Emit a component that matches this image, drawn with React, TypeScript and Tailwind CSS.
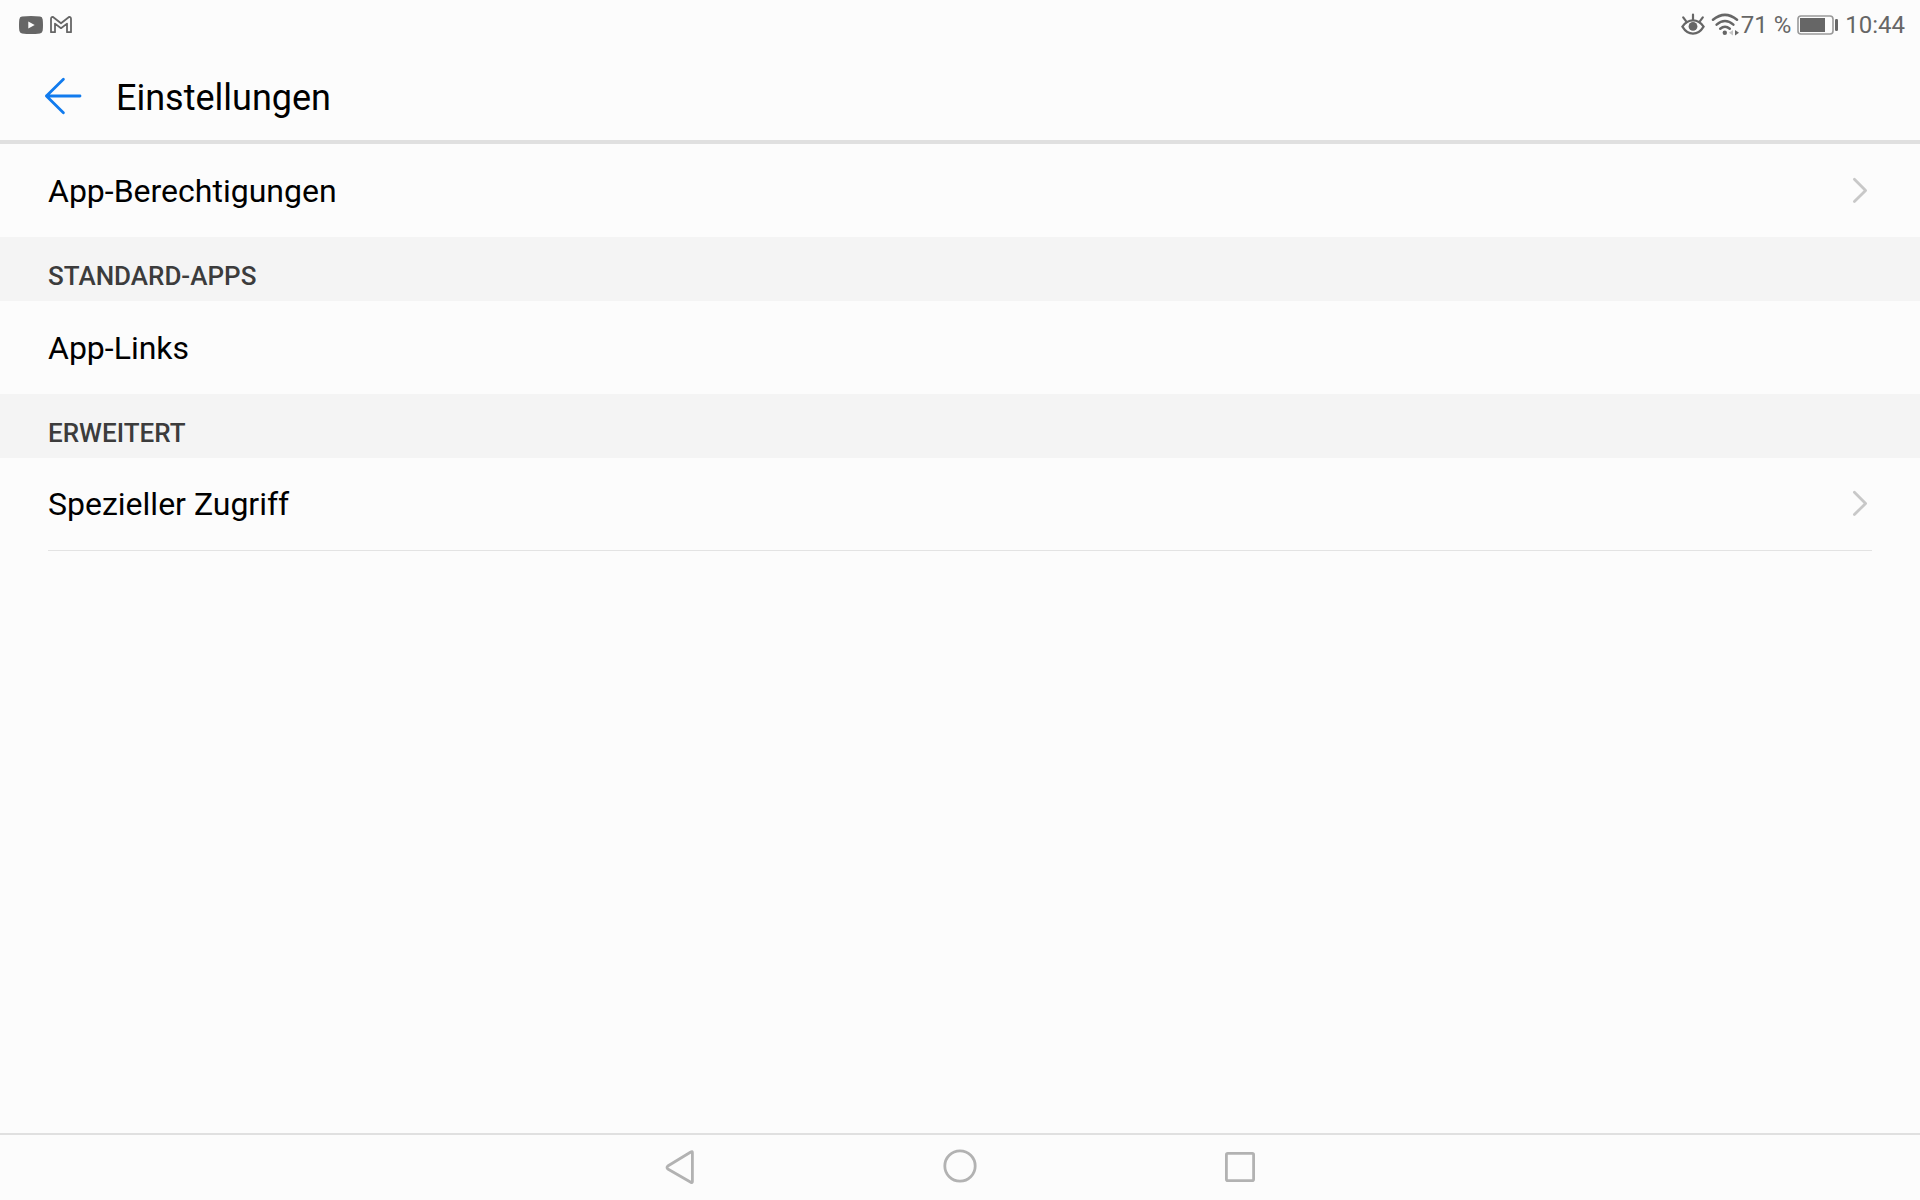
import { ReactNode } from "react";

function YoutubeIcon() {
  return (
    <svg width="24" height="18" viewBox="0 0 24 18" aria-hidden="true">
      <path
        d="M3 .6Q12-.4 21 .6Q23.4.9 23.7 3.4Q24.3 9 23.7 14.6Q23.4 17.1 21 17.4Q12 18.4 3 17.4Q.6 17.1.3 14.6Q-.3 9 .3 3.4Q.6.9 3 .6ZM9.3 5.4V12.6L15.7 9Z"
        fill="#666"
      />
    </svg>
  );
}

function GmailIcon() {
  return (
    <svg width="22" height="18" viewBox="0 0 22 18" fill="none" stroke="#666" strokeWidth="1.8" strokeLinejoin="round" aria-hidden="true">
      <path d="M1 16.2V3Q1 .8 3 1L11 7.2L19 1Q21 .8 21 3V16.2H17V7.6L11 12.2L5 7.6V16.2Z" />
    </svg>
  );
}

function EyeIcon() {
  return (
    <svg width="24" height="24" viewBox="0 0 24 24" fill="none" stroke="#666" strokeWidth="2.2" strokeLinecap="round" aria-hidden="true">
      <path d="M1.4 13.6Q5.6 7.4 12 7.4Q18.4 7.4 22.6 13.6Q18.4 20.6 12 20.6Q5.6 20.6 1.4 13.6Z" />
      <path d="M12 7V1.6M5 8.2L2.2 4.4M19 8.2L21.8 4.4" />
      <circle cx="12" cy="13.4" r="4.4" fill="#666" stroke="none" />
    </svg>
  );
}

function WifiIcon() {
  return (
    <svg width="30" height="24" viewBox="0 0 30 24" fill="none" stroke="#666" strokeWidth="2.5" strokeLinecap="round" aria-hidden="true">
      <path d="M2 6.8Q14 -3 26 6.8" />
      <path d="M5.6 11.6Q14 4.4 22.4 11.6" />
      <path d="M9.2 15.8Q14 11.6 18.8 15.8" />
      <circle cx="13.8" cy="19.8" r="2.2" fill="#666" stroke="none" />
      <path d="M22 17V22.6L18 19.8Z" fill="#c4c4c4" stroke="none" />
      <path d="M24 17V22.6L28 19.8Z" fill="#666" stroke="none" />
    </svg>
  );
}

function BatteryIcon() {
  return (
    <svg width="42" height="20" viewBox="0 0 42 20" aria-hidden="true">
      <rect x="1" y="1" width="35" height="18" rx="3" fill="none" stroke="#999" strokeWidth="1.6" />
      <rect x="3" y="3" width="25" height="14" fill="#666" />
      <rect x="38" y="4" width="3" height="12" rx="1.2" fill="#666" />
    </svg>
  );
}

function Chevron() {
  return (
    <svg width="24" height="32" viewBox="0 0 24 32" fill="none" stroke="#c8c8c8" strokeWidth="2.8" strokeLinecap="round" strokeLinejoin="round" aria-hidden="true">
      <path d="M6.4 4.2L17.6 15.4L6.4 26.6" />
    </svg>
  );
}

function SettingsRow({ label, chevron, divider }: { label: string; chevron?: boolean; divider?: boolean }) {
  return (
    <li className="px-12">
      <button
        type="button"
        className={`flex h-[93px] w-full items-center justify-between text-left text-[32px] leading-10 text-black ${
          divider ? "border-b border-[#e3e3e3]" : ""
        }`}
      >
        {label}
        {chevron && <Chevron />}
      </button>
    </li>
  );
}

function Section({ title, children }: { title?: string; children: ReactNode }) {
  return (
    <section>
      {title && (
        <h2 className="flex h-16 items-center bg-[#f4f4f4] px-12 pt-3.5 text-[26px] leading-8 font-medium text-[#3c3c3c]">
          {title}
        </h2>
      )}
      <ul>{children}</ul>
    </section>
  );
}

function NavButton({ label, children }: { label: string; children: ReactNode }) {
  return (
    <button type="button" aria-label={label} className="flex h-[65px] w-[280px] items-center justify-center">
      <svg width="40" height="40" viewBox="0 0 40 40" fill="none" stroke="#b2b2b2" strokeWidth="2.8" strokeLinejoin="round">
        {children}
      </svg>
    </button>
  );
}

export default function App() {
  return (
    <div className="flex min-h-screen flex-col bg-[#fcfcfc] font-['Roboto',sans-serif]">
      {/* Status bar */}
      <div className="flex h-12 items-center justify-between pt-0.5 pr-[15px] pl-[19px] text-2xl text-[#666]">
        <div className="flex items-center gap-[7px]">
          <YoutubeIcon />
          <GmailIcon />
        </div>
        <div className="flex items-center">
          <EyeIcon />
          <span className="pl-1.5">
            <WifiIcon />
          </span>
          <span>71 %</span>
          <span className="px-1.5">
            <BatteryIcon />
          </span>
          <time>10:44</time>
        </div>
      </div>

      {/* Title bar */}
      <header className="flex h-24 items-center gap-[29px] border-b-4 border-[#e0e0e0] px-[39px] pt-2">
        <button type="button" aria-label="Zurück">
          <svg width="48" height="48" viewBox="0 0 48 48" fill="none" stroke="#117bee" strokeWidth="2.8" strokeLinecap="round" strokeLinejoin="round">
            <path d="M41 22H7.4M24.4 5.2L7.4 22L24.4 38.8" />
          </svg>
        </button>
        <h1 className="text-4xl text-black">Einstellungen</h1>
      </header>

      <main className="grow">
        <Section>
          <SettingsRow label="App-Berechtigungen" chevron />
        </Section>
        <Section title="STANDARD-APPS">
          <SettingsRow label="App-Links" />
        </Section>
        <Section title="ERWEITERT">
          <SettingsRow label="Spezieller Zugriff" chevron divider />
        </Section>
      </main>

      {/* System navigation */}
      <nav className="flex justify-center border-t-2 border-[#e0e0e0]">
        <NavButton label="Zurück">
          <path d="M32.4 4.6V33.4Q32.4 35.2 30.8 34.2L7.8 21Q6.2 19.4 7.8 18L30.8 4Q32.4 3 32.4 4.6Z" />
        </NavButton>
        <NavButton label="Startbildschirm">
          <circle cx="20" cy="18" r="15.2" />
        </NavButton>
        <NavButton label="Letzte Apps">
          <rect x="6.4" y="5.4" width="27.2" height="27.2" rx="1.4" />
        </NavButton>
      </nav>
    </div>
  );
}
